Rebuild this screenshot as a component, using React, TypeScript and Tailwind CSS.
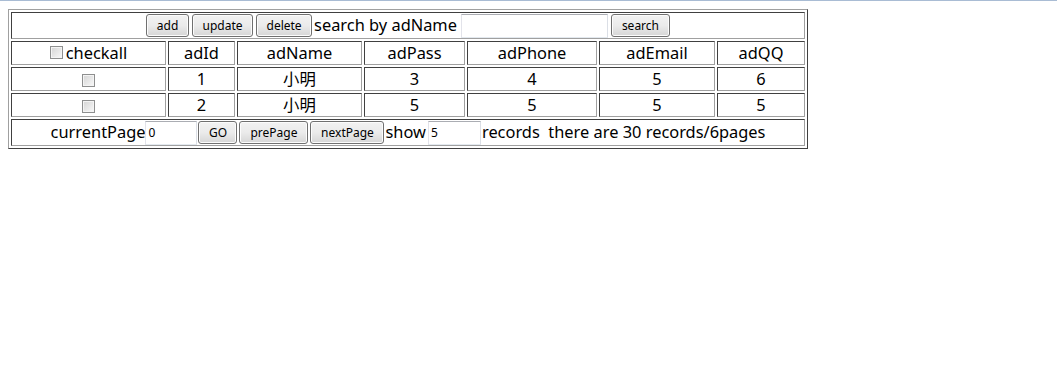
const cell =
  "border border-t-[#404040] border-l-[#404040] border-b-[#a0a0a0] border-r-[#a0a0a0] p-0 text-center align-middle leading-[20px]";

const btn =
  "h-[23px] rounded-[3px] border border-[#707070] bg-gradient-to-b from-[#f2f2f2] via-[#ebebeb] to-[#d6d6d6] text-[12px] leading-none text-black shadow-[inset_0_0_0_1px_#fcfcfc]";

const input =
  "h-[24px] border border-[#abadb3] border-b-[#e3e9ef] border-r-[#dbdfe6] border-l-[#e2e3ea] bg-white px-[2px] text-[12px] text-black outline-none";

function Box() {
  return (
    <input
      type="checkbox"
      className="m-0 inline-block h-[13px] w-[13px] appearance-none border border-[#8e8f8f] bg-gradient-to-br from-[#d4d4d4] to-[#f9f9f9] align-middle shadow-[inset_0_0_0_1px_#f4f4f4]"
    />
  );
}

const headers = ["adId", "adName", "adPass", "adPhone", "adEmail", "adQQ"];

const rows = [
  { id: 1, name: "小明", pass: 3, phone: 4, email: 5, qq: 6 },
  { id: 2, name: "小明", pass: 5, phone: 5, email: 5, qq: 5 },
];

export default function App() {
  return (
    <div
      className="min-h-[380px] border-t border-[#a9bcd4] bg-white px-2 pt-2 text-[16.4px] text-black"
      style={{ fontFamily: '"Noto Sans", "Noto Sans CJK SC", sans-serif' }}
    >
      <table className="w-[800px] table-fixed border-separate border-spacing-[2px] border border-t-[#a0a0a0] border-l-[#a0a0a0] border-b-[#404040] border-r-[#404040]">
        <colgroup>
          <col className="w-[155px]" />
          <col className="w-[67px]" />
          <col className="w-[125px]" />
          <col className="w-[101px]" />
          <col className="w-[130px]" />
          <col className="w-[116px]" />
          <col className="w-[88px]" />
        </colgroup>
        <tbody>
          <tr className="h-[27px]">
            <td colSpan={7} className={cell}>
              <div className="flex h-[25px] items-center justify-center">
                <button className={`${btn} w-[43px]`}>add</button>
                <button className={`${btn} ml-[3px] w-[61px]`}>update</button>
                <button className={`${btn} ml-[3px] w-[56px]`}>delete</button>
                <span className="ml-[2px] leading-none">search by adName</span>
                <input className={`${input} ml-[4px] w-[147px]`} defaultValue="" />
                <button className={`${btn} ml-[3px] w-[59px]`}>search</button>
              </div>
            </td>
          </tr>
          <tr className="h-[24px]">
            <td className={cell}>
              <span className="inline-flex items-center">
                <Box />
                <span className="ml-[3px]">checkall</span>
              </span>
            </td>
            {headers.map((h) => (
              <td key={h} className={cell}>
                {h}
              </td>
            ))}
          </tr>
          {rows.map((r) => (
            <tr key={r.id} className="h-[24px]">
              <td className={cell}>
                <Box />
              </td>
              <td className={cell}>{r.id}</td>
              <td className={cell}>{r.name}</td>
              <td className={cell}>{r.pass}</td>
              <td className={cell}>{r.phone}</td>
              <td className={cell}>{r.email}</td>
              <td className={cell}>{r.qq}</td>
            </tr>
          ))}
          <tr className="h-[27px]">
            <td colSpan={7} className={cell}>
              <div className="flex h-[25px] items-center justify-center">
                <span className="leading-none">currentPage</span>
                <input className={`${input} w-[52px]`} defaultValue="0" />
                <button className={`${btn} ml-[1px] w-[39px]`}>GO</button>
                <button className={`${btn} ml-[2px] w-[69px]`}>prePage</button>
                <button className={`${btn} ml-[2px] w-[74px]`}>nextPage</button>
                <span className="ml-[1px] leading-none">show</span>
                <input className={`${input} ml-[2px] w-[53px]`} defaultValue="5" />
                <span className="ml-[1px] whitespace-pre leading-none">
                  records  there are 30 records/6pages
                </span>
              </div>
            </td>
          </tr>
        </tbody>
      </table>
    </div>
  );
}
